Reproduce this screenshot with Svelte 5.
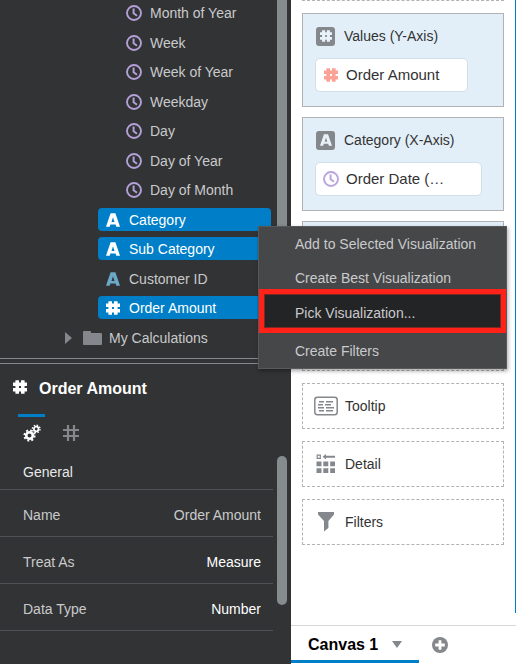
<script>
  const fields = [
    { kind: 'clock', label: 'Month of Year' },
    { kind: 'clock', label: 'Week' },
    { kind: 'clock', label: 'Week of Year' },
    { kind: 'clock', label: 'Weekday' },
    { kind: 'clock', label: 'Day' },
    { kind: 'clock', label: 'Day of Year' },
    { kind: 'clock', label: 'Day of Month' },
    { kind: 'text', label: 'Category', selected: true },
    { kind: 'text', label: 'Sub Category', selected: true },
    { kind: 'text', label: 'Customer ID' },
    { kind: 'hash', label: 'Order Amount', selected: true },
    { kind: 'folder', label: 'My Calculations' }
  ];
</script>

{#snippet clock()}
  <svg class="i16" viewBox="0 0 16 16" fill="none" stroke="currentColor" aria-hidden="true">
    <circle cx="8" cy="8" r="7" stroke-width="1.9" />
    <path d="M7.6 3.4V8.3L11 10.8" stroke-width="2" />
  </svg>
{/snippet}

{#snippet letter()}
  <svg class="i14" viewBox="0 0 14 14" fill="currentColor" fill-rule="evenodd" aria-hidden="true">
    <path d="M4.6 .3H9.4L14 13.7H10.3L9.6 11.5H4.4L3.7 13.7H0ZM7 4.2L5.5 8.9H8.5Z" />
  </svg>
{/snippet}

{#snippet hash()}
  <svg class="i14" viewBox="0 0 14 14" fill="none" stroke="currentColor" stroke-width="3.4" aria-hidden="true">
    <path d="M4.2 .2V13.8M9.8 .2V13.8" stroke-width="3.6" />
    <path d="M0 4.2H14M0 9.8H14" />
  </svg>
{/snippet}

<div class="app">
  <aside>
    <div class="tree">
      <ul>
        {#each fields as f}
          <li>
            <button class="field {f.kind}" class:selected={f.selected}>
              {#if f.kind === 'clock'}
                {@render clock()}
              {:else if f.kind === 'text'}
                {@render letter()}
              {:else if f.kind === 'hash'}
                {@render hash()}
              {:else}
                <svg class="arrow" viewBox="0 0 7 12" fill="currentColor" aria-hidden="true"><path d="M0 0L7 6L0 12Z" /></svg>
                <svg class="folder-icon" viewBox="0 0 19 14" fill="currentColor" aria-hidden="true">
                  <path d="M0 1Q0 0 1 0H7Q8 0 8 1V2H18Q19 2 19 3V13Q19 14 18 14H1Q0 14 0 13Z" />
                </svg>
              {/if}
              <span>{f.label}</span>
            </button>
          </li>
        {/each}
      </ul>
      <div class="thumb full"></div>
    </div>

    <div class="splitter"></div>

    <section class="details">
      <h2>{@render hash()}<span>Order Amount</span></h2>
      <nav>
        <button class="on" aria-label="General properties">
          <svg width="18" height="18" viewBox="0 0 18 18" fill="none" stroke="currentColor" aria-hidden="true">
            <circle cx="6.5" cy="11.5" r="3.3" stroke-width="2.6" />
            <circle cx="6.5" cy="11.5" r="5.2" stroke-width="1.8" stroke-dasharray="2.05 2.034" />
            <circle cx="13.2" cy="5" r="2.3" stroke-width="1.7" />
            <circle cx="13.2" cy="5" r="3.8" stroke-width="1.4" stroke-dasharray="1.5 1.485" />
          </svg>
        </button>
        <button aria-label="Number format">
          <svg width="16" height="16" viewBox="0 0 16 16" fill="none" stroke="currentColor" stroke-width="2.2" aria-hidden="true">
            <path d="M5 0V16M11 0V16M0 5H16M0 11H16" />
          </svg>
        </button>
      </nav>
      <div class="props">
        <form>
          <h3>General</h3>
          <div class="prop">
            <label for="name">Name</label>
            <input id="name" value="Order Amount" />
          </div>
          <div class="prop">
            <label for="treat">Treat As</label>
            <select id="treat"><option>Measure</option><option>Attribute</option></select>
          </div>
          <div class="prop">
            <label for="type">Data Type</label>
            <select id="type"><option>Number</option><option>Text</option></select>
          </div>
        </form>
        <div class="thumb"></div>
      </div>
    </section>
  </aside>

  <main>
    <div class="grammar">
      <div class="zone stub"></div>
      <section class="zone solid">
        <h4>
          <span class="badge">{@render hash()}</span>
          Values (Y-Axis)
        </h4>
        <button class="chip amount">{@render hash()}Order Amount</button>
      </section>
      <section class="zone solid">
        <h4>
          <span class="badge">{@render letter()}</span>
          Category (X-Axis)
        </h4>
        <button class="chip date">{@render clock()}Order Date (…</button>
      </section>
      <section class="zone solid"></section>
      <section class="zone"></section>
      <section class="zone">
        <svg width="24" height="20" viewBox="0 0 24 20" fill="none" stroke="currentColor" aria-hidden="true">
          <rect x=".8" y="1.3" width="22.4" height="17.4" rx="2.6" stroke-width="1.5" />
          <path d="M5 5.7H10M12 5.7H19M4 8.7H9M11 8.7H17M4 11.7H10M12 11.7H20M5 14.7H10M12 14.7H19" stroke-width="1.4" />
        </svg>
        <span>Tooltip</span>
      </section>
      <section class="zone">
        <svg width="24" height="20" viewBox="0 0 24 20" fill="currentColor" aria-hidden="true">
          <path d="M3.2 1.2H6.3V4.3H3.2Z" fill="none" stroke="currentColor" stroke-width="1.2" />
          <path d="M8.6 2.7L12 0V1.7H21V3.8H12V5.4Z" />
          <path d="M2.5 7.6H7.5V12.3H2.5ZM9.3 7.6H14.3V12.3H9.3ZM16.2 7.6H21V12.3H16.2ZM2.5 14.3H7.5V19H2.5ZM9.3 14.3H14.3V19H9.3ZM16.2 14.3H21V19H16.2Z" />
        </svg>
        <span>Detail</span>
      </section>
      <section class="zone">
        <svg width="24" height="20" viewBox="0 0 24 20" fill="currentColor" aria-hidden="true">
          <path d="M4 0H20V2.6L14.4 9V16L10 19.5V9L4 2.6Z" />
        </svg>
        <span>Filters</span>
      </section>
    </div>
    <footer>
      <button class="tab">
        Canvas 1
        <svg width="10" height="7" viewBox="0 0 10 7" fill="#84888c" aria-hidden="true"><path d="M0 0H10L5 7Z" /></svg>
      </button>
      <button class="add" aria-label="Add canvas">
        <svg width="16" height="16" viewBox="0 0 16 16" aria-hidden="true">
          <circle cx="8" cy="8" r="8" fill="#84888c" />
          <path d="M8 3.2V12.8M3.2 8H12.8" stroke="#fff" stroke-width="2.8" />
        </svg>
      </button>
    </footer>
  </main>

  <div class="menu" role="menu">
    <button role="menuitem">Add to Selected Visualization</button>
    <button role="menuitem">Create Best Visualization</button>
    <button role="menuitem" class="picked">Pick Visualization...</button>
    <button role="menuitem">Create Filters</button>
  </div>
</div>

<style>
  .app {
    position: relative;
    display: flex;
    min-height: 100vh;
    overflow: hidden;
    background: #fff;
    color: #333;
    font: 14px/20px "Liberation Sans", Arial, sans-serif;
  }
  .app * {
    box-sizing: border-box;
  }
  button,
  input,
  select {
    margin: 0;
    padding: 0;
    border: 0;
    background: none;
    color: inherit;
    font: inherit;
  }
  h2,
  h3,
  h4,
  ul {
    margin: 0;
    padding: 0;
    font-size: 14px;
    font-weight: normal;
    list-style: none;
  }
  svg {
    display: block;
    flex: none;
  }
  .i16 {
    width: 16px;
    height: 16px;
  }
  .i14 {
    width: 14px;
    height: 14px;
  }

  aside {
    display: flex;
    flex-direction: column;
    flex: none;
    width: 291px;
    background: #323335;
    color: #c9cacb;
  }
  .tree {
    display: flex;
    justify-content: space-between;
    padding-right: 4px;
  }
  ul {
    width: 271px;
    padding: 1px 0 3px;
  }
  li {
    display: flex;
    margin-bottom: 6px;
  }
  li:nth-child(odd) {
    margin-bottom: 7px;
  }
  .field {
    display: flex;
    align-items: center;
    flex: 1;
    height: 23px;
    margin-left: 98px;
    padding-left: 8px;
    gap: 9px;
    border-radius: 4px;
  }
  .clock {
    padding-left: 28px;
    gap: 8px;
  }
  .clock svg {
    color: #b3a0d6;
  }
  .text svg {
    color: #6aa9c8;
  }
  .selected,
  .selected svg {
    color: #fff;
  }
  .selected {
    background: #007fc8;
  }
  .folder {
    margin-left: 65px;
    padding-left: 0;
    gap: 7px;
  }
  .folder svg {
    color: #84888c;
  }
  .arrow {
    width: 7px;
    height: 12px;
    margin-right: 4px;
  }
  .folder-icon {
    width: 19px;
    height: 14px;
  }
  .thumb {
    flex: none;
    width: 10px;
    height: 149px;
    margin-top: 9px;
    border-radius: 5px;
    background: #868b8e;
  }
  .full {
    height: auto;
    margin-top: 0;
    border-radius: 0 0 5px 5px;
  }
  .splitter {
    height: 6px;
    border: solid #85898c;
    border-width: 1px 0;
  }
  h2 {
    display: flex;
    align-items: center;
    gap: 12px;
    height: 50px;
    padding-left: 13px;
    color: #fff;
    font-size: 16px;
    font-weight: bold;
  }
  h2 svg {
    margin-bottom: 4px;
  }
  nav {
    display: flex;
    gap: 12px;
    padding-left: 18px;
  }
  nav button {
    display: flex;
    align-items: center;
    justify-content: center;
    width: 27px;
    height: 33px;
    padding-top: 2px;
    border-top: 3px solid transparent;
    color: #84888c;
  }
  nav .on {
    border-color: #007fc8;
    color: #fff;
  }
  .props {
    display: flex;
    justify-content: space-between;
    padding-right: 4px;
  }
  form {
    width: 273px;
  }
  h3 {
    height: 43px;
    padding: 15px 0 0 23px;
    border-bottom: 1px solid #505356;
    color: #e8e8e8;
  }
  .prop {
    display: flex;
    justify-content: space-between;
    align-items: center;
    height: 47px;
    padding: 4px 12px 0 23px;
    border-bottom: 1px solid #505356;
  }
  input,
  select {
    width: 130px;
    height: 20px;
    text-align: right;
  }
  select {
    appearance: none;
    color: #fff;
    text-align-last: right;
  }

  main {
    display: flex;
    flex-direction: column;
    flex: 1;
  }
  .grammar {
    padding: 0 11px;
    border-right: 1px solid #007fc8;
    margin-bottom: 12px;
    flex: 1;
  }
  .zone {
    display: flex;
    align-items: center;
    gap: 7px;
    height: 46px;
    margin-bottom: 12px;
    padding-left: 11px;
    border: 1px dashed #b0b3b5;
  }
  .zone > svg {
    color: #84888c;
  }
  .stub {
    height: 1px;
    border-width: 0 0 1px;
  }
  .solid {
    display: block;
    height: 94px;
    margin-bottom: 10px;
    padding: 12px;
    border: 1px solid #b0b3b5;
    background: #e2eff8;
  }
  h4 {
    display: flex;
    align-items: center;
    gap: 9px;
    padding-left: 1px;
  }
  .badge {
    display: flex;
    align-items: center;
    justify-content: center;
    width: 19px;
    height: 19px;
    border-radius: 3px;
    background: #84888c;
    color: #e9f2f9;
  }
  .badge .i14 {
    width: 12px;
    height: 12px;
  }
  .chip {
    display: flex;
    align-items: center;
    gap: 7px;
    height: 34px;
    margin-top: 12px;
    padding: 0 28px 0 8px;
    border: 1px solid #d2dfe8;
    border-radius: 5px;
    background: #fff;
    font-size: 15px;
  }
  .amount {
    gap: 8px;
  }
  .amount svg {
    color: #fba196;
  }
  .date {
    padding: 0 37px 0 7px;
  }
  .date svg {
    color: #b9a5dd;
  }
  footer {
    display: flex;
    align-items: center;
    height: 39px;
    border-top: 1px solid #d6d6d6;
  }
  .tab {
    display: flex;
    align-items: center;
    justify-content: space-between;
    width: 128px;
    height: 37px;
    margin-bottom: 1px;
    padding: 3px 17px 0;
    border-bottom: 3px solid #007fc8;
    color: #000;
    font-size: 16px;
    font-weight: bold;
  }
  .add {
    margin-left: 13px;
  }

  .menu {
    position: absolute;
    top: 226px;
    left: 258px;
    width: 249px;
    border: 1px solid #57595b;
    background: #464749;
    box-shadow: 1px 2px 4px rgba(0, 0, 0, 0.35);
    color: #c9cacb;
  }
  .menu button {
    display: block;
    width: 100%;
    height: 34px;
    padding-left: 36px;
    text-align: left;
  }
  .menu .picked {
    position: relative;
    height: 36px;
    margin-bottom: 3px;
    background: #232426;
  }
  .picked::after {
    content: "";
    position: absolute;
    inset: -6px 0 -2px;
    border: 5px solid #ff2218;
    box-shadow: inset 0 0 0 1px #7c2724;
  }
</style>
